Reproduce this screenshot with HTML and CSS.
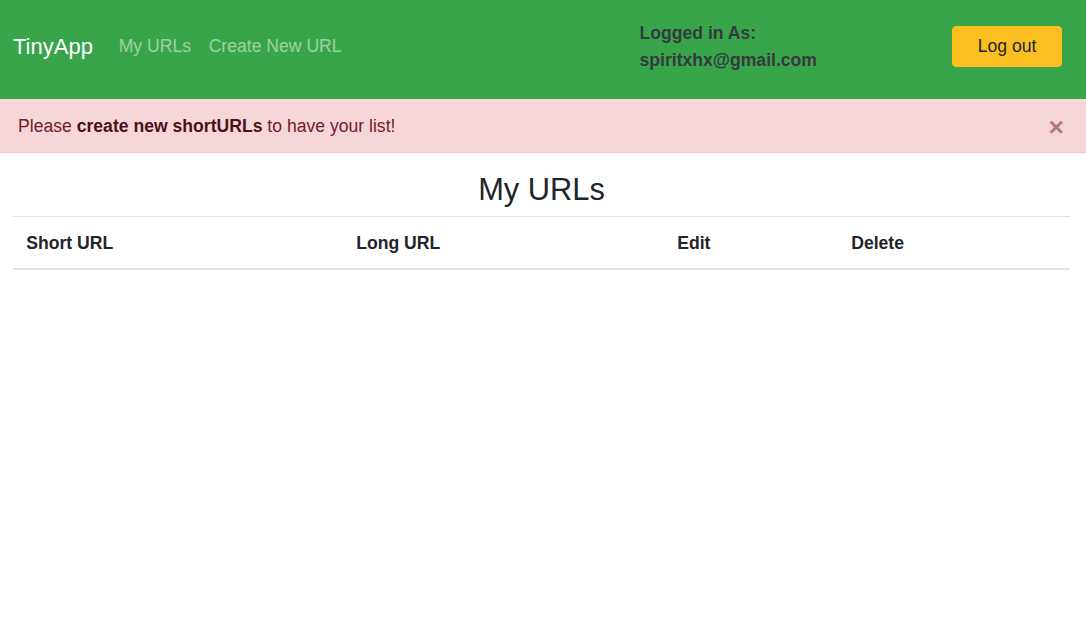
FILE: index.html
```html
<!DOCTYPE html>
<html lang="en">
<head>
<meta charset="utf-8">
<title>TinyApp</title>
<link rel="stylesheet" href="styles.css">
</head>
<body>
<nav class="navbar">
  <a class="brand" href="#">TinyApp</a>
  <ul class="nav">
    <li><a class="nav-link" href="#">My URLs</a></li>
    <li><a class="nav-link" href="#">Create New URL</a></li>
  </ul>
  <div class="user">
    <div>Logged in As:</div>
    <div>spiritxhx@gmail.com</div>
  </div>
  <button class="btn-logout" type="button">Log out</button>
</nav>
<div class="alert">
  <span>Please <a class="alert-link" href="#">create new shortURLs</a> to have your list!</span>
  <button class="close" type="button">&times;</button>
</div>
<main class="content">
  <h3 class="title">My URLs</h3>
  <table class="table">
    <thead>
      <tr>
        <th class="c1">Short URL</th>
        <th class="c2">Long URL</th>
        <th class="c3">Edit</th>
        <th class="c4">Delete</th>
      </tr>
    </thead>
    <tbody></tbody>
  </table>
</main>
</body>
</html>
```
FILE: styles.css
```css
* { box-sizing: border-box; }
html, body { margin: 0; padding: 0; }
body {
  font-family: "Liberation Sans", Arial, sans-serif;
  font-size: 17.6px;
  line-height: 1.5;
  color: #212529;
  background: #fff;
}
a { text-decoration: none; }

.navbar {
  display: flex;
  align-items: center;
  background: #38a54a;
  height: 99px;
  padding: 0 24px 6px 13px;
}
.brand {
  color: #fff;
  font-size: 22px;
  line-height: 1.5;
  margin-right: 17px;
}
.nav {
  list-style: none;
  margin: 0;
  padding: 0;
  display: flex;
  flex: 1;
}
.nav-link {
  display: block;
  color: rgba(255, 255, 255, 0.5);
  padding: 8px 8.8px;
}
.user {
  font-weight: bold;
  color: #343a40;
  line-height: 26.4px;
  margin-right: 135px;
}
.btn-logout {
  width: 110px;
  height: 41px;
  background: #fcbf20;
  border: 1px solid #fcbf20;
  border-radius: 4px;
  color: #212529;
  font-family: inherit;
  font-size: 17.6px;
  line-height: 1.5;
  padding: 0;
}

.alert {
  display: flex;
  align-items: center;
  justify-content: space-between;
  background: #f7d6d9;
  border-bottom: 1px solid #f5c6cb;
  color: #721c24;
  height: 54px;
  padding: 1px 22px 0 18px;
}
.alert-link {
  color: #491217;
  font-weight: bold;
}
.close {
  background: none;
  border: 0;
  padding: 0;
  font-family: inherit;
  font-size: 26.4px;
  font-weight: bold;
  line-height: 1;
  opacity: 0.5;
  color: #721c24;
  margin-top: 2px;
}

.content {
  padding: 0 16px 0 13px;
}
.title {
  margin: 19px 0 7px;
  font-size: 30.8px;
  font-weight: 500;
  line-height: 1.2;
  text-align: center;
}
.table {
  width: 100%;
  border-collapse: collapse;
}
.table th {
  text-align: left;
  font-weight: bold;
  padding: 13px 13.2px 12.5px;
  line-height: 26px;
  border-top: 1px solid #dee2e6;
  border-bottom: 2px solid #dee2e6;
  vertical-align: bottom;
}
.c1 { width: 330px; }
.c2 { width: 321px; }
.c3 { width: 174px; }
.c4 { width: auto; }
```
